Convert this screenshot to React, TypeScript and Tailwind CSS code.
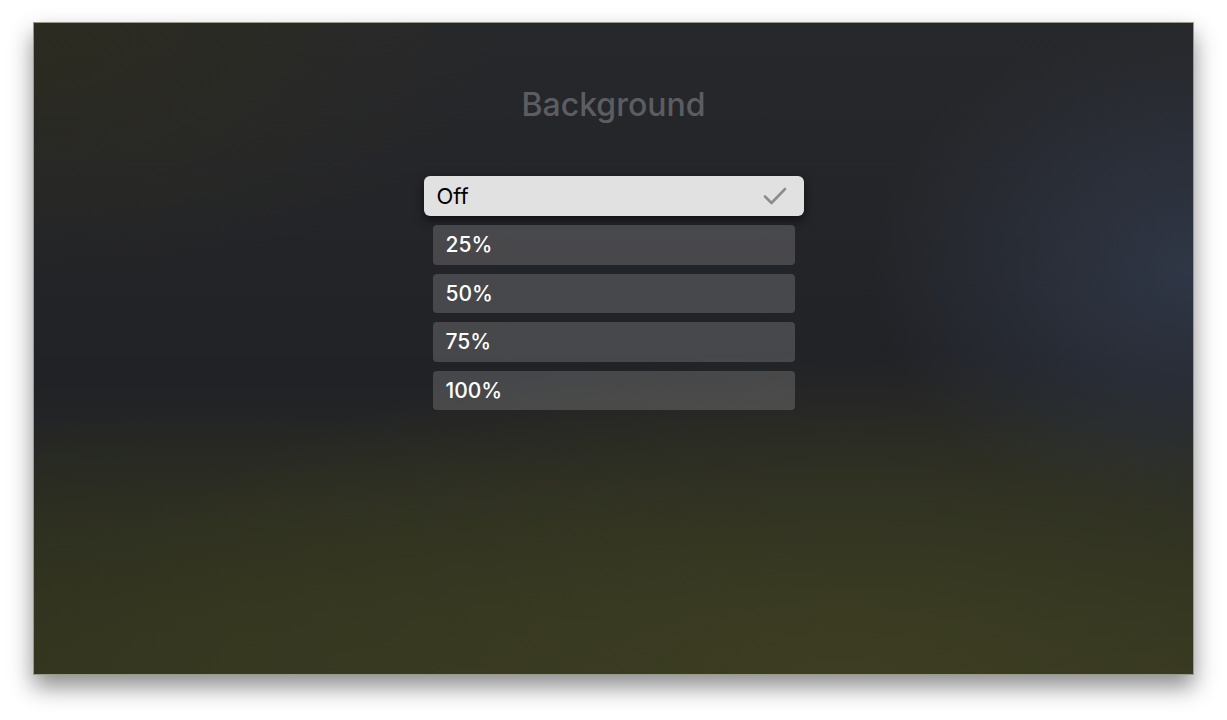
import React from 'react';

const levels = ['25%', '50%', '75%', '100%'];

const App: React.FC = () => {
  return (
    <div className="min-h-[720px] w-full bg-white px-[33px] pt-[22px] font-['Inter','Noto_Sans',sans-serif]">
      <div className="h-[653px] w-full border border-[#9a9a8a] shadow-[0_12px_22px_rgba(0,0,0,0.45)] bg-[radial-gradient(ellipse_28%_38%_at_100%_38%,rgba(52,62,82,0.7),transparent),radial-gradient(ellipse_70%_50%_at_70%_100%,#3c3d22,transparent),radial-gradient(ellipse_60%_40%_at_15%_100%,#34361f,transparent),radial-gradient(ellipse_40%_40%_at_0%_0%,#2c2b20,transparent),linear-gradient(180deg,#27282b_0%,#212226_55%,#33351f_100%)]">
        <div className="flex flex-col items-center">
          <h1 className="mt-[66px] text-[32px] font-medium leading-none text-[#5c5d60]">Background</h1>

          <div className="mt-[55px] flex flex-col items-center gap-[9px]">
            <div className="flex h-[40px] w-[380px] items-center justify-between rounded-[6px] bg-[#e1e1e1] pl-[13px] pr-[17px] shadow-[0_4px_10px_rgba(0,0,0,0.55)]">
              <span className="text-[22px] leading-none text-black">Off</span>
              <svg width="24" height="18" viewBox="0 0 24 18" fill="none">
                <path d="M2 9.5 L8.5 16 L22 2" stroke="#8c8c8c" strokeWidth="2.6" strokeLinecap="round" strokeLinejoin="round" />
              </svg>
            </div>
            {levels.map((l) => (
              <div
                key={l}
                className="flex h-[39.5px] w-[362px] items-center rounded-[4px] bg-[rgba(255,255,255,0.17)] px-[13px]"
              >
                <span className="text-[21px] font-medium leading-none text-white">{l}</span>
              </div>
            ))}
          </div>
        </div>
      </div>
    </div>
  );
};

export default App;
